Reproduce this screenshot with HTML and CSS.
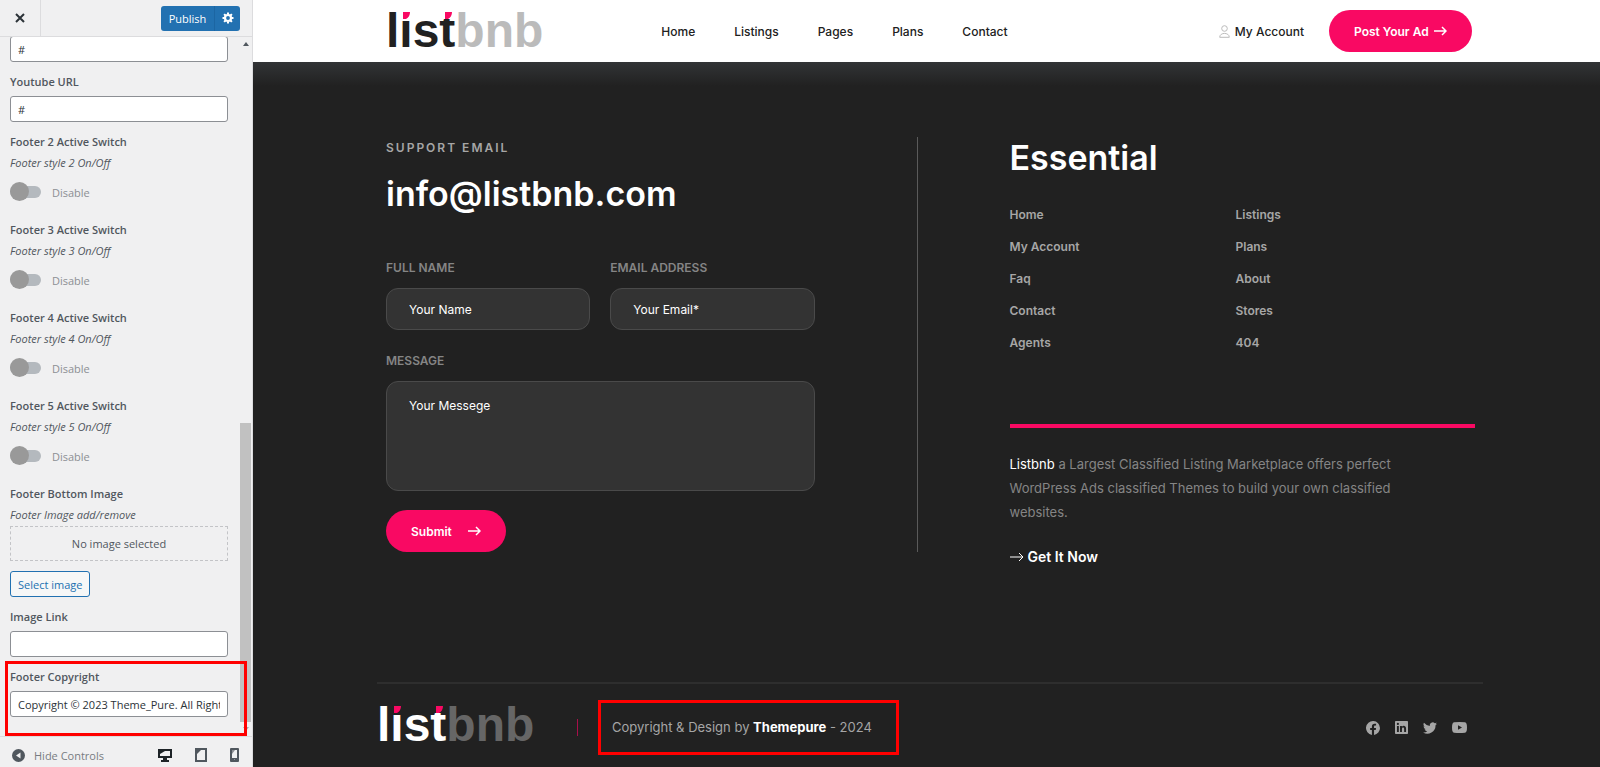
FILE: index.html
```html
<!DOCTYPE html>
<html lang="en">
<head>
<meta charset="UTF-8">
<meta name="viewport" content="width=device-width, initial-scale=1.0">
<title>Listbnb Customizer</title>
<link rel="stylesheet" href="styles.css">
</head>
<body>

<div class="customizer">

    <form class="sidebar">
        <div class="sidebar-header">
            <button type="button" class="close-btn" aria-label="Close">
                <svg width="10" height="10" viewBox="0 0 10 10"><path d="M1 1l8 8M9 1l-8 8" stroke="#2c3338" stroke-width="2" fill="none"/></svg>
            </button>
            <div class="publish">
                <button type="button" class="publish-btn">Publish</button>
                <button type="button" class="gear-btn" aria-label="Publish Settings">
                    <svg width="12" height="12" viewBox="0 0 12 12"><circle cx="6" cy="6" r="3" fill="none" stroke="#fff" stroke-width="2.2"/><path d="M6 .5v2M6 9.500v2M.5 6h2M9.500 6h2M2.100 2.100l1.400 1.400M8.500 8.500l1.400 1.400M9.900 2.100L8.500 3.500M3.500 8.500L2.100 9.900" stroke="#fff" stroke-width="2"/></svg>
                </button>
            </div>
        </div>

        <div class="sidebar-body">
            <div class="controls">
                <div class="control">
                    <input type="text" class="field" value="#" aria-label="Linkedin URL">
                </div>
                <div class="control">
                    <label for="youtube">Youtube URL</label>
                    <input type="text" id="youtube" class="field" value="#">
                </div>
                <div class="control control-switch">
                    <label for="footer2">Footer 2 Active Switch</label>
                    <p class="desc">Footer style 2 On/Off</p>
                    <div class="switch-row"><input type="checkbox" id="footer2" class="switch"><span>Disable</span></div>
                </div>
                <div class="control control-switch">
                    <label for="footer3">Footer 3 Active Switch</label>
                    <p class="desc">Footer style 3 On/Off</p>
                    <div class="switch-row"><input type="checkbox" id="footer3" class="switch"><span>Disable</span></div>
                </div>
                <div class="control control-switch">
                    <label for="footer4">Footer 4 Active Switch</label>
                    <p class="desc">Footer style 4 On/Off</p>
                    <div class="switch-row"><input type="checkbox" id="footer4" class="switch"><span>Disable</span></div>
                </div>
                <div class="control control-switch">
                    <label for="footer5">Footer 5 Active Switch</label>
                    <p class="desc">Footer style 5 On/Off</p>
                    <div class="switch-row"><input type="checkbox" id="footer5" class="switch"><span>Disable</span></div>
                </div>
                <div class="control">
                    <h3 class="control-title">Footer Bottom Image</h3>
                    <p class="desc">Footer Image add/remove</p>
                    <div class="placeholder">No image selected</div>
                    <button type="button" class="select-btn">Select image</button>
                </div>
                <div class="control">
                    <label for="imagelink">Image Link</label>
                    <input type="text" id="imagelink" class="field">
                </div>
                <div class="control control-marked">
                    <label for="copyright">Footer Copyright</label>
                    <input type="text" id="copyright" class="field" value="Copyright © 2023 Theme_Pure. All Rights Reserved">
                </div>
            </div>
            <div class="scrollbar">
                <span class="arrow arrow-up"></span>
                <span class="thumb"></span>
                <span class="arrow arrow-down"></span>
            </div>
        </div>

        <div class="sidebar-footer">
            <button type="button" class="hide-btn">
                <svg width="13" height="13" viewBox="0 0 13 13"><circle cx="6.500" cy="6.500" r="6.500" fill="#50575e"/><path d="M8.500 3.500v6L4 6.500z" fill="#f0f0f1"/></svg>
                Hide Controls
            </button>
            <div class="devices">
                <button type="button" aria-label="Desktop">
                    <svg width="14" height="14" viewBox="0 0 14 14"><path d="M0 1h14v9H9v2h2v2H3v-2h2v-2H0z" fill="#1d2327"/><path d="M2 3h10v5H2z" fill="#f0f0f1"/><path d="M2 3h5L2 6z" fill="#1d2327"/></svg>
                </button>
                <button type="button" aria-label="Tablet">
                    <svg width="12" height="14" viewBox="0 0 12 14"><path d="M0 0h12v14H0z" fill="#50575e"/><path d="M2 2h8v10H2z" fill="#f0f0f1"/><path d="M2 2h4L2 6z" fill="#50575e"/></svg>
                </button>
                <button type="button" aria-label="Mobile">
                    <svg width="9" height="14" viewBox="0 0 9 14"><rect width="9" height="14" rx="1" fill="#50575e"/><path d="M2 2h5v8H2z" fill="#f0f0f1"/><path d="M2 2h3L2 6zM4 11h1v1H4z" fill="#8c8f94"/></svg>
                </button>
            </div>
        </div>
    </form>

    <div class="preview">
        <header class="header">
            <a href="#" class="logo">list<span>bnb</span>
                <svg class="logo-marks" width="70" height="9" viewBox="0 0 70 9"><path class="patch" d="M15 0h11v9H15zM54 0h15v8H54z"/><path d="M17 1h7q0 5-4 7h-3zM59 1h7q0 5-4 7h-3z" fill="#f90963"/></svg>
            </a>
            <nav class="nav">
                <a href="#">Home</a>
                <a href="#">Listings</a>
                <a href="#">Pages</a>
                <a href="#">Plans</a>
                <a href="#">Contact</a>
            </nav>
            <div class="header-right">
                <a href="#" class="account">
                    <svg width="11" height="13" viewBox="0 0 11 13" fill="none" stroke="#bbb"><circle cx="5.500" cy="3.500" r="2.800"/><path d="M.7 12.300c0-5.200 9.600-5.200 9.600 0z"/></svg>
                    My Account
                </a>
                <a href="#" class="btn post-btn">Post Your Ad
                    <svg width="13" height="10" viewBox="0 0 13 10" fill="none" stroke="#fff" stroke-width="1.500"><path d="M0 5h12M8 1l4 4-4 4"/></svg>
                </a>
            </div>
        </header>

        <footer class="footer">
            <div class="footer-top">
                <form class="contact">
                    <p class="support">SUPPORT EMAIL</p>
                    <h2><a href="mailto:info@listbnb.com">info@listbnb.com</a></h2>
                    <div class="form-row">
                        <div class="form-group">
                            <label for="name">FULL NAME</label>
                            <input type="text" id="name" placeholder="Your Name">
                        </div>
                        <div class="form-group">
                            <label for="email">EMAIL ADDRESS</label>
                            <input type="email" id="email" placeholder="Your Email*">
                        </div>
                    </div>
                    <div class="form-group">
                        <label for="message">MESSAGE</label>
                        <textarea id="message" placeholder="Your Messege"></textarea>
                    </div>
                    <button type="button" class="btn submit-btn">Submit
                        <svg width="13" height="10" viewBox="0 0 13 10" fill="none" stroke="#fff" stroke-width="1.500"><path d="M0 5h12M8 1l4 4-4 4"/></svg>
                    </button>
                </form>

                <div class="essential">
                    <h2>Essential</h2>
                    <ul class="links">
                        <li><a href="#">Home</a></li>
                        <li><a href="#">Listings</a></li>
                        <li><a href="#">My Account</a></li>
                        <li><a href="#">Plans</a></li>
                        <li><a href="#">Faq</a></li>
                        <li><a href="#">About</a></li>
                        <li><a href="#">Contact</a></li>
                        <li><a href="#">Stores</a></li>
                        <li><a href="#">Agents</a></li>
                        <li><a href="#">404</a></li>
                    </ul>
                    <div class="about">
                        <p><span>Listbnb</span> a Largest Classified Listing Marketplace offers perfect WordPress Ads classified Themes to build your own classified websites.</p>
                        <a href="#" class="get-btn">
                            <svg width="14" height="10" viewBox="0 0 14 10" fill="none" stroke="#fff"><path d="M0 5h13M9 1l4 4-4 4"/></svg>
                            Get It Now
                        </a>
                    </div>
                </div>
            </div>

            <div class="footer-bottom">
                <a href="#" class="logo logo-light">list<span>bnb</span>
                    <svg class="logo-marks" width="70" height="9" viewBox="0 0 70 9"><path class="patch" d="M15 0h11v9H15zM54 0h15v8H54z"/><path d="M17 1h7q0 5-4 7h-3zM59 1h7q0 5-4 7h-3z" fill="#f90963"/></svg>
                </a>
                <span class="divider"></span>
                <p class="copyright">Copyright &amp; Design by <strong>Themepure</strong> - 2024</p>
                <div class="social">
                    <a href="#" aria-label="Facebook"><svg width="14" height="14" viewBox="0 0 24 24"><path d="M24 12a12 12 0 1 0-13.900 11.900v-8.400H7.100V12h3V9.400c0-3 1.800-4.700 4.500-4.700 1.300 0 2.700.2 2.700.2v3h-1.500c-1.500 0-2 .9-2 1.900V12h3.400l-.5 3.500h-2.900v8.400A12 12 0 0 0 24 12z"/></svg></a>
                    <a href="#" aria-label="Linkedin"><svg width="13" height="13" viewBox="0 0 24 24"><path fill-rule="evenodd" d="M1.500 0h21A1.500 1.500 0 0 1 24 1.500v21a1.500 1.500 0 0 1-1.500 1.500h-21A1.500 1.500 0 0 1 0 22.500v-21A1.500 1.500 0 0 1 1.500 0zM3.600 9v11.400h3.500V9zM5.300 3.300a2 2 0 1 0 0 4.100 2 2 0 0 0 0-4.100zM9.300 9v11.400h3.500v-5.600c0-3.500 4.100-3.400 4.100 0v5.600h3.500v-6.300c0-5.900-5.500-6.600-7.600-3.500V9z"/></svg></a>
                    <a href="#" aria-label="Twitter"><svg width="14" height="14" viewBox="0 0 24 24"><path d="M24 4.600a10 10 0 0 1-2.800.8 5 5 0 0 0 2.100-2.700 10 10 0 0 1-3.100 1.200 4.900 4.900 0 0 0-8.400 4.500A14 14 0 0 1 1.700 3.100a4.900 4.900 0 0 0 1.500 6.600 5 5 0 0 1-2.200-.6 4.900 4.900 0 0 0 3.900 4.900 5 5 0 0 1-2.200.1 4.900 4.900 0 0 0 4.600 3.400A9.900 9.900 0 0 1 0 19.500a14 14 0 0 0 21.500-12.400A10 10 0 0 0 24 4.600z"/></svg></a>
                    <a href="#" aria-label="Youtube"><svg width="15" height="11" viewBox="0 0 15 11"><path fill-rule="evenodd" d="M2 .3q5.500-.6 11 0 2 .2 2 5.200t-2 5.200q-5.500.6-11 0-2-.2-2-5.200T2 .3zM6 3.200v4.600l4-2.300z"/></svg></a>
                </div>
            </div>
        </footer>
    </div>

</div>

</body>
</html>
```
FILE: styles.css
```css
* {
    box-sizing: border-box;
}

body {
    margin: 0;
    font-family: Inter, sans-serif;
    font-size: 12px;
}

h2, h3, p, ul {
    margin: 0;
    padding: 0;
}

a {
    color: inherit;
    text-decoration: none;
}

button {
    font-family: inherit;
    padding: 0;
    border: 0;
    background: none;
    cursor: pointer;
}

.customizer {
    display: flex;
    height: 100vh;
    overflow: hidden;
}

/* sidebar */
.sidebar {
    display: flex;
    flex-direction: column;
    width: 253px;
    flex-shrink: 0;
    background: #f0f0f1;
    border-right: 1px solid #dcdcde;
    font-family: "Open Sans", sans-serif;
    font-size: 11px;
    color: #50575e;
}

.sidebar-header {
    display: flex;
    justify-content: space-between;
    align-items: center;
    height: 37px;
    flex-shrink: 0;
    padding-right: 12px;
    border-bottom: 1px solid #dcdcde;
}

.close-btn {
    width: 41px;
    height: 36px;
    border-right: 1px solid #dcdcde;
}

.publish {
    display: flex;
    height: 25px;
    background: #2271b1;
    border-radius: 3px;
    overflow: hidden;
}

.publish-btn {
    width: 54px;
    color: #fff;
    font-size: 11px;
    border-right: 1px solid #1c66a3;
}

.gear-btn {
    display: flex;
    align-items: center;
    justify-content: center;
    width: 25px;
}

.sidebar-body {
    display: flex;
    flex: 1;
    min-height: 0;
    overflow: hidden;
}

.controls {
    display: flex;
    flex-direction: column;
    justify-content: flex-end;
    gap: 10px;
    flex: 1;
    padding: 0 11px 19px 10px;
}

.control {
    display: flex;
    flex-direction: column;
    flex-shrink: 0;
}

.control label,
.control-title {
    font-size: 11px;
    font-weight: 600;
    line-height: 20px;
}

.field {
    width: 100%;
    height: 26px;
    padding: 0 7px;
    border: 1px solid #8c8f94;
    border-radius: 3px;
    background: #fff;
    font-family: inherit;
    font-size: 11px;
    color: #2c3338;
}

.control label + .field {
    margin-top: 4px;
}

.desc {
    font-style: italic;
    line-height: 22px;
}

.control-switch {
    padding-bottom: 8px;
}

.switch-row {
    display: flex;
    align-items: center;
    gap: 11px;
    height: 20px;
    margin-top: 8px;
    color: #8c8f94;
}

.switch {
    appearance: none;
    position: relative;
    width: 31px;
    height: 12px;
    margin: 0;
    border-radius: 6px;
    background: #b4b9be;
}

.switch::before {
    content: "";
    position: absolute;
    left: 0;
    top: -4px;
    width: 19px;
    height: 19px;
    border-radius: 50%;
    background: #999;
}

.placeholder {
    height: 35px;
    border: 1px dashed #c3c4c7;
    line-height: 33px;
    text-align: center;
}

.select-btn {
    align-self: flex-start;
    height: 26px;
    margin-top: 10px;
    padding: 0 7px;
    border: 1px solid #2271b1;
    border-radius: 3px;
    background: #f6f7f7;
    color: #2271b1;
    font-size: 11px;
}

.control-marked {
    position: relative;
}

.control-marked::after {
    content: "";
    position: absolute;
    top: -6px;
    right: -19px;
    bottom: -19px;
    left: -5px;
    border: 3px solid #f00;
    pointer-events: none;
}

.scrollbar {
    display: flex;
    flex-direction: column;
    align-items: center;
    width: 13px;
    padding: 5px 1px;
}

.arrow {
    border: 3px solid transparent;
}

.arrow-up {
    border-top: 0;
    border-bottom: 4px solid #50575e;
}

.arrow-down {
    border-bottom: 0;
    border-top: 4px solid #a7aaad;
}

.thumb {
    width: 11px;
    height: 299px;
    margin: auto 0 5px;
    background: #c1c1c1;
}

.sidebar-footer {
    display: flex;
    justify-content: space-between;
    align-items: center;
    height: 31px;
    flex-shrink: 0;
    padding: 7px 13px 0 12px;
    border-top: 1px solid #dcdcde;
}

.hide-btn {
    display: flex;
    align-items: center;
    gap: 9px;
    font-size: 11px;
    color: #787c82;
}

.devices {
    display: flex;
    gap: 23px;
}

.devices button,
.hide-btn {
    height: 16px;
}

/* preview */
.preview {
    flex: 1;
    min-width: 0;
    display: flex;
    flex-direction: column;
    background: #212121;
}

.header {
    display: flex;
    align-items: center;
    height: 62px;
    flex-shrink: 0;
    padding: 0 128px 0 133px;
    background: #fff;
    color: #212121;
}

.logo {
    position: relative;
    font-family: "Liberation Sans", sans-serif;
    font-size: 48px;
    font-weight: 700;
    line-height: 46px;
    color: #212121;
}

.logo span {
    color: #bbb;
}

.logo-marks {
    position: absolute;
    left: 0;
    top: 3px;
}

.patch {
    fill: #fff;
}

.logo-light {
    color: #fff;
}

.logo-light span {
    color: #666;
}

.logo-light .patch {
    fill: #212121;
}

.nav {
    display: flex;
    gap: 39px;
    margin-left: 118px;
    font-weight: 500;
}

.header-right {
    display: flex;
    align-items: center;
    gap: 25px;
    margin-left: auto;
}

.account {
    display: flex;
    align-items: center;
    gap: 5px;
    font-weight: 500;
}

.btn {
    display: flex;
    align-items: center;
    justify-content: space-between;
    height: 42px;
    padding: 0 25px;
    border-radius: 21px;
    background: #f90963;
    color: #fff;
    font-size: 12px;
    font-weight: 600;
}

.post-btn {
    width: 143px;
}

.submit-btn {
    width: 120px;
    margin-top: 19px;
}

.footer {
    flex: 1;
    color: #a6a6a6;
    background: linear-gradient(#323436, #212121 24px);
}

.footer-top {
    display: grid;
    grid-template-columns: 532fr 558fr;
    align-items: start;
    padding: 75px 125px 115px 133px;
}

.footer-top h2 {
    font-size: 34px;
    font-weight: 600;
    line-height: 42px;
    color: #fff;
}

.contact {
    padding-right: 102px;
    border-right: 1px solid #5a5a5a;
}

.support {
    margin-bottom: 14px;
    font-weight: 600;
    line-height: 22px;
    letter-spacing: 2px;
}

.form-row {
    display: flex;
    gap: 20px;
    margin: 43px 0 21px;
}

.form-group {
    display: flex;
    flex-direction: column;
    gap: 10px;
    flex: 1;
    min-width: 0;
}

.form-group label {
    font-weight: 600;
    line-height: 20px;
    color: #858585;
}

.form-group input,
.form-group textarea {
    width: 100%;
    height: 42px;
    padding: 0 22px;
    border: 1px solid #4a4a4a;
    border-radius: 12px;
    background: #333;
    font-family: inherit;
    font-size: 12px;
    color: #fff;
}

.form-group textarea {
    height: 110px;
    padding-top: 16px;
    resize: none;
}

.form-group ::placeholder {
    color: #fff;
}

.essential {
    padding-left: 92px;
}

.links {
    display: grid;
    grid-template-columns: 226px 1fr;
    row-gap: 12px;
    margin-top: 26px;
    list-style: none;
    font-weight: 600;
    line-height: 20px;
}

.about {
    margin-top: 71px;
    padding-top: 24px;
    border-top: 4px solid #f90963;
}

.about p {
    max-width: 410px;
    font-size: 13px;
    line-height: 24px;
    color: #858585;
}

.about p span {
    color: #fff;
}

.get-btn {
    display: flex;
    align-items: center;
    gap: 4px;
    margin-top: 23px;
    font-size: 14px;
    font-weight: 600;
    line-height: 20px;
    color: #fff;
}

.footer-bottom {
    display: flex;
    align-items: center;
    margin: 0 117px 0 124px;
    padding-top: 16px;
    border-top: 2px solid #2e2e2e;
}

.footer-bottom .logo {
    width: 200px;
    padding-bottom: 6px;
}

.divider {
    width: 1px;
    height: 17px;
    margin-right: 20px;
    background: #a80f4a;
}

.copyright {
    width: 301px;
    padding-left: 11px;
    border: 3px solid #f00;
    font-size: 13px;
    line-height: 49px;
    white-space: nowrap;
}

.copyright strong {
    color: #fff;
}

.social {
    display: flex;
    align-items: center;
    gap: 15px;
    margin: 0 16px 0 auto;
    fill: #a6a6a6;
}

.social a {
    display: flex;
}
```
